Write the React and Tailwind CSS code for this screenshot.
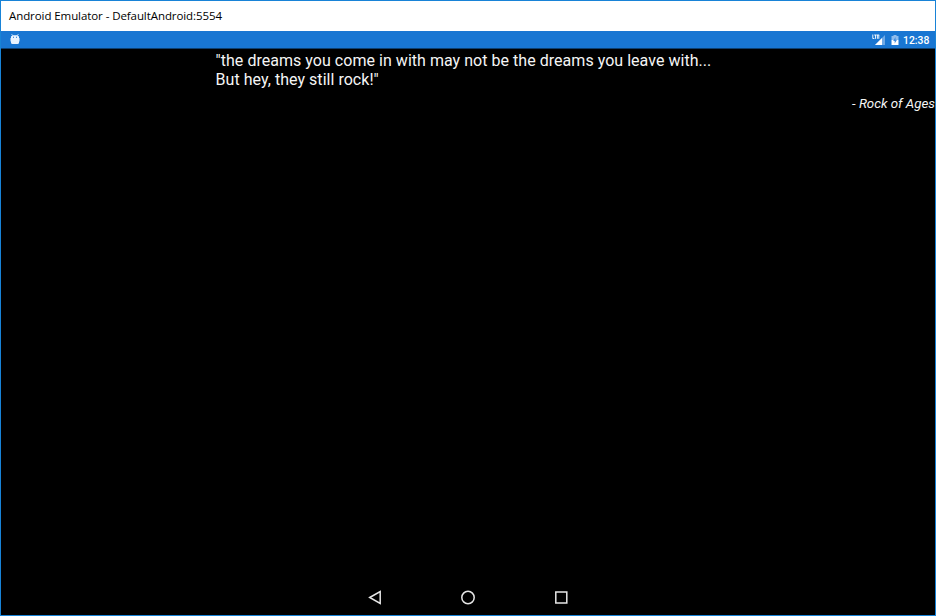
function DebugIcon() {
  return (
    <svg className="h-[11px] w-[10px]" viewBox="0 0 10 11" fill="#eaf4ff">
      <path d="M1.600.2 3 1.600M8.400.2 7 1.600" stroke="#eaf4ff" strokeWidth="0.9" />
      <path
        fillRule="evenodd"
        d="M2.600 1.200h4.800L9 2.600v1.400h.5v3.500H9v1.200Q9 10 7.400 10H2.600Q1 10 1 8.700V7.500H.5V4H1V2.600zM3 2.800v1h1v-1zM6 2.800v1h1v-1z"
      />
    </svg>
  );
}

function SignalIcon() {
  return (
    <svg className="h-3 w-[14px]" viewBox="0 0 14 12">
      <path d="M13 1v10H3z" fill="#6fa9e6" />
      <path d="M10 4v7H3z" fill="#fff" />
      <path
        d="M.8.5v4h1.600M2.200 1h2.600M3.500 1v3.800M5 1h2.200M5.400 1v3.800M6.800 1v3.800"
        stroke="#fff"
        strokeWidth="0.9"
        fill="none"
      />
    </svg>
  );
}

function BatteryIcon() {
  return (
    <svg className="h-3 w-2" viewBox="0 0 8 12">
      <path d="M2.500 1h3v1H7.500v4H.5V2h2z" fill="#8fbcec" />
      <path d="M.5 6h7v5h-7z" fill="#fff" />
      <path d="M4.500 3 2.200 7h1.500v2.500L6 5.800H4.500z" fill="#3f8bdc" />
    </svg>
  );
}

export default function App() {
  return (
    <div className="flex h-[616px] w-[936px] flex-col overflow-hidden border border-[#1883d7] bg-black text-[#f5f5f5]">
      <header className="flex h-[30px] shrink-0 items-center bg-white pl-2 font-['Open_Sans',sans-serif] text-[11.500px] whitespace-nowrap text-black">
        <span className="tracking-[-0.08px]">Android Emulator - DefaultAndroid:5554</span>
      </header>
      <div className="flex h-[18px] shrink-0 items-center justify-between border-b border-[#0d3f70] bg-[#1976d2] pr-[6px] pl-[9px]">
        <DebugIcon />
        <div className="flex items-center font-[Roboto,sans-serif] text-[10.400px] leading-4 font-medium text-white">
          <SignalIcon />
          <span className="ml-[5px] flex">
            <BatteryIcon />
          </span>
          <span className="ml-1 w-[26px] pt-[2px] whitespace-nowrap">12:38</span>
        </div>
      </div>
      <main className="flex flex-1 flex-col font-[Roboto,sans-serif]">
        <p className="mt-[2px] ml-[214.600px] text-[16px] leading-[19px] tracking-[0.034px] whitespace-nowrap">
          "the dreams you come in with may not be the dreams you leave with...
          <br />
          But hey, they still rock!"
        </p>
        <p className="mt-[7px] text-right text-[13.300px] leading-4 whitespace-nowrap italic">- Rock of Ages</p>
      </main>
      <nav className="flex h-[35px] shrink-0 items-center justify-center gap-[77px] pb-px">
        <svg className="h-4 w-4" viewBox="0 0 16 16" fill="none" stroke="#e6e6e6" strokeWidth="1.500">
          <path d="M2.700 8.500 13.200 2.500v12z" />
        </svg>
        <svg className="h-4 w-4" viewBox="0 0 16 16" fill="none" stroke="#e6e6e6" strokeWidth="1.500">
          <circle cx="8" cy="8.500" r="6.200" />
        </svg>
        <svg className="h-4 w-4" viewBox="0 0 16 16" fill="none" stroke="#e6e6e6" strokeWidth="1.500">
          <path d="M2.800 3h11v11h-11z" />
        </svg>
      </nav>
    </div>
  );
}
